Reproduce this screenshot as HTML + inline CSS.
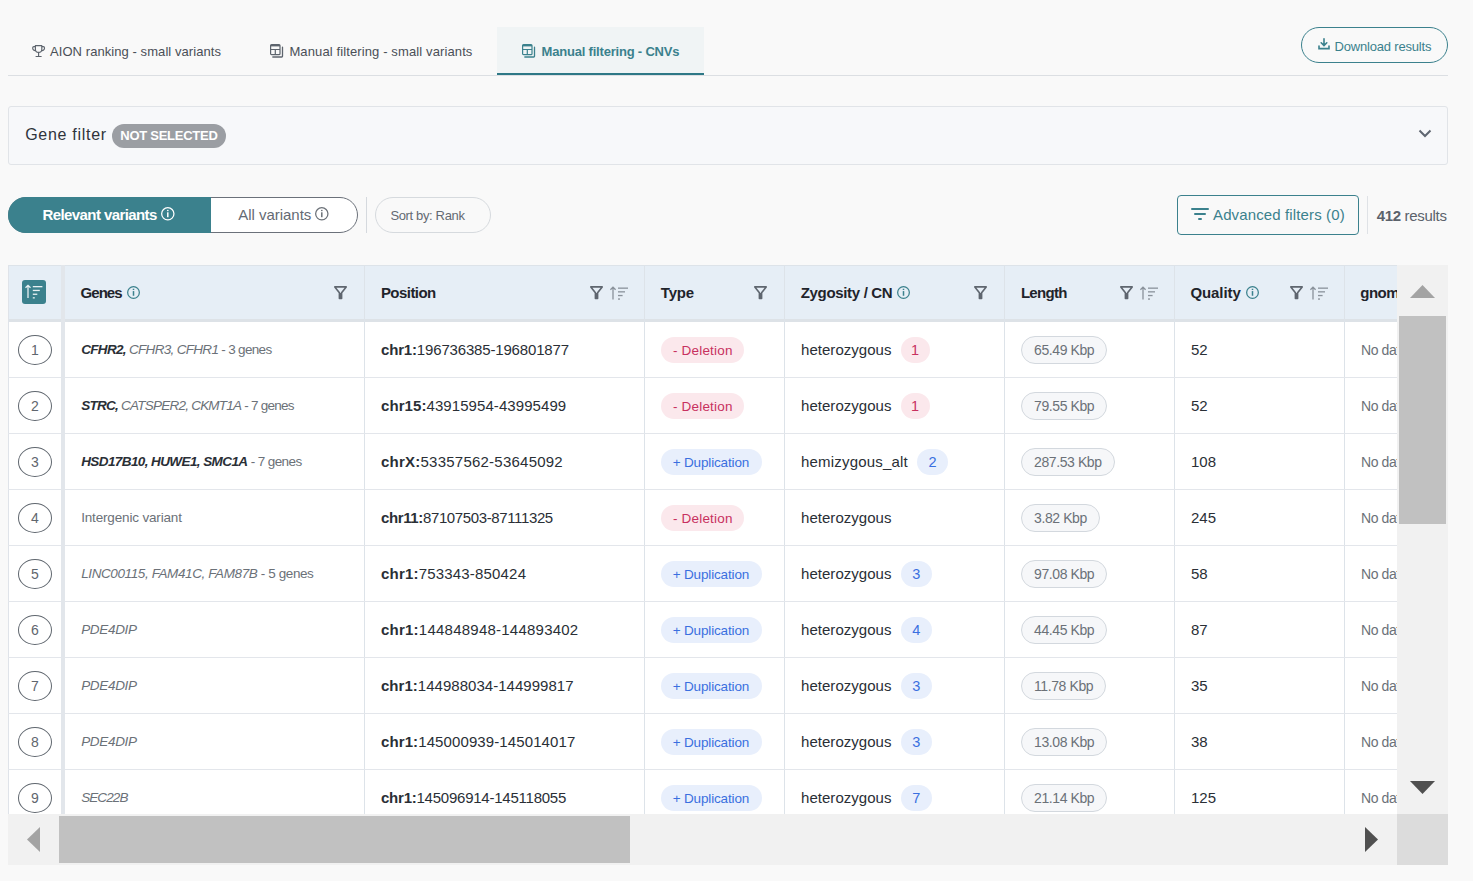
<!DOCTYPE html><html><head><meta charset="utf-8"><style>
html,body{margin:0;padding:0;}
body{width:1473px;height:881px;overflow:hidden;background:#f9f9f9;position:relative;font-family:"Liberation Sans",sans-serif;}
.t{position:absolute;white-space:pre;}
.r{position:absolute;}
.g{color:#6b7178} .n{color:#6b7178;font-style:normal} b{font-weight:700}
.pill{height:28px;line-height:26px;box-sizing:border-box;border:1px solid #d3d8de;background:#f6f7f9;border-radius:14px;padding:0 12px;font-size:14px;color:#6b7178;white-space:pre;letter-spacing:-0.4px}
svg.r{overflow:visible}
</style></head><body>
<div class="r" style="left:497px;top:27px;width:207px;height:48px;background:#f0f4f5"></div>
<div class="r" style="left:8px;top:75px;width:1440px;height:1px;background:#dcdfe3"></div>
<div class="r" style="left:497px;top:73px;width:207px;height:2px;background:#2e7886"></div>
<svg class="r" style="left:32px;top:45px;" width="13" height="13" viewBox="0 0 13 13"><g fill="none" stroke="#5d646d" stroke-width="1.15" stroke-linejoin="round"><path d="M3.4 0.6h6.4v3.6a3.2 3.2 0 0 1-6.4 0z"></path><path d="M3.4 1.6H1.9a1.2 1.2 0 0 0-1.2 1.2v0.4a2.4 2.4 0 0 0 2.9 2.3M9.8 1.6h1.5a1.2 1.2 0 0 1 1.2 1.2v0.4a2.4 2.4 0 0 1-2.9 2.3"></path><path d="M6.6 7.4v4.1M3.6 11.5h6"></path></g></svg>
<div class="t" style="left: 50px; top: 44.9px; font-size: 13px; line-height: 13px; color: rgb(74, 79, 87); font-weight: 400; font-style: normal; letter-spacing: 0.069px;">AION ranking - small variants</div>
<svg class="r" style="left:270px;top:44px;" width="14" height="14" viewBox="0 0 14 14"><g fill="none" stroke="#5d646d" stroke-width="1.2"><rect x="0.6" y="0.6" width="9.4" height="10.1" rx="1"></rect><path d="M0.6 1.6h9.4" stroke-width="1.6"></path><path d="M0.6 5.5h9.4M5.3 5.5v5.2"></path><path d="M12.5 3.2V12.2a0.8 0.8 0 0 1-0.8 0.8H2.8" stroke-width="1.3" stroke-linecap="round"></path></g></svg>
<div class="t" style="left: 289.4px; top: 44.9px; font-size: 13px; line-height: 13px; color: rgb(74, 79, 87); font-weight: 400; font-style: normal; letter-spacing: 0.119px;">Manual filtering - small variants</div>
<svg class="r" style="left:522px;top:44px;" width="14" height="14" viewBox="0 0 14 14"><g fill="none" stroke="#3b818d" stroke-width="1.2"><rect x="0.6" y="0.6" width="9.4" height="10.1" rx="1"></rect><path d="M0.6 1.6h9.4" stroke-width="1.6"></path><path d="M0.6 5.5h9.4M5.3 5.5v5.2"></path><path d="M12.5 3.2V12.2a0.8 0.8 0 0 1-0.8 0.8H2.8" stroke-width="1.3" stroke-linecap="round"></path></g></svg>
<div class="t" style="left: 541.5px; top: 44.9px; font-size: 13px; line-height: 13px; color: rgb(59, 129, 141); font-weight: 700; font-style: normal; letter-spacing: -0.195px;">Manual filtering - CNVs</div>
<div class="r" style="left:1301px;top:27px;width:147px;height:35.5px;border:1px solid #3b818d;border-radius:18px;box-sizing:border-box"></div>
<svg class="r" style="left:1318px;top:38px;" width="12" height="12" viewBox="0 0 12 12"><g fill="none" stroke="#3b818d" stroke-width="1.6" stroke-linecap="round"><path d="M6 0.8v6.8M3.2 4.8L6 7.6l2.8-2.8"></path><path d="M1 8v2.6h10V8"></path></g></svg>
<div class="t" style="left: 1334.5px; top: 40.2px; font-size: 13px; line-height: 13px; color: rgb(59, 129, 141); font-weight: 400; font-style: normal; letter-spacing: -0.181px;">Download results</div>
<div class="r" style="left:8px;top:106px;width:1440px;height:59px;background:#f7f8fa;border:1px solid #e1e4e8;border-radius:3px;box-sizing:border-box"></div>
<div class="t" style="left: 25.2px; top: 127.16px; font-size: 16px; line-height: 16px; color: rgb(47, 52, 59); font-weight: 400; font-style: normal; letter-spacing: 0.719px;">Gene filter</div>
<div class="r" style="left:112px;top:124px;width:114px;height:24px;background:#9b9ea3;border-radius:12px"></div>
<div class="t" style="left: 120.3px; top: 128.6px; font-size: 13px; line-height: 13px; color: rgb(255, 255, 255); font-weight: 700; font-style: normal; letter-spacing: -0.264px;">NOT SELECTED</div>
<svg class="r" style="left:1418px;top:129px;" width="14" height="10" viewBox="0 0 14 10"><path d="M1.5 1.5l5.5 5.5 5.5-5.5" fill="none" stroke="#5f6670" stroke-width="2"></path></svg>
<div class="r" style="left:8px;top:197px;width:350px;height:36px;background:#fff;border:1px solid #6b717a;border-radius:18px;box-sizing:border-box"></div>
<div class="r" style="left:8px;top:197px;width:202.5px;height:36px;background:#3b818d;border-radius:18px 0 0 18px"></div>
<div class="t" style="left: 42.4px; top: 207.1px; font-size: 15px; line-height: 15px; color: rgb(255, 255, 255); font-weight: 700; font-style: normal; letter-spacing: -0.577px;">Relevant variants</div>
<svg class="r" style="left:160.6px;top:207.2px;" width="13.6" height="13.6" viewBox="0 0 13.6 13.6"><g fill="none" stroke="#ffffff" stroke-width="1.25"><circle cx="6.8" cy="6.8" r="6.1499999999999995"></circle></g><rect x="6.05" y="5.30" width="1.5" height="4.90" fill="#ffffff"></rect><rect x="6.05" y="2.86" width="1.5" height="1.3" fill="#ffffff"></rect></svg>
<div class="t" style="left: 238.3px; top: 206.9px; font-size: 15px; line-height: 15px; color: rgb(100, 106, 115); font-weight: 400; font-style: normal; letter-spacing: -0.033px;">All variants</div>
<svg class="r" style="left:315px;top:207.2px;" width="13.6" height="13.6" viewBox="0 0 13.6 13.6"><g fill="none" stroke="#6b7178" stroke-width="1.25"><circle cx="6.8" cy="6.8" r="6.1499999999999995"></circle></g><rect x="6.05" y="5.30" width="1.5" height="4.90" fill="#6b7178"></rect><rect x="6.05" y="2.86" width="1.5" height="1.3" fill="#6b7178"></rect></svg>
<div class="r" style="left:366px;top:197px;width:1px;height:36px;background:#d5d9de"></div>
<div class="r" style="left:375px;top:197px;width:116px;height:36px;background:transparent;border:1px solid #d6dade;border-radius:18px;box-sizing:border-box"></div>
<div class="t" style="left: 390.4px; top: 208.8px; font-size: 13px; line-height: 13px; color: rgb(100, 106, 115); font-weight: 400; font-style: normal; letter-spacing: -0.355px;">Sort by: Rank</div>
<div class="r" style="left:1177px;top:195px;width:182px;height:40px;border:1px solid #3b818d;border-radius:4px;box-sizing:border-box"></div>
<div class="r" style="left:1191px;top:208px;width:18px;height:2px;background:#3b818d;border-radius:1px"></div>
<div class="r" style="left:1194px;top:213px;width:12px;height:2px;background:#3b818d;border-radius:1px"></div>
<div class="r" style="left:1198px;top:218px;width:4px;height:2px;background:#3b818d;border-radius:1px"></div>
<div class="t" style="left: 1213px; top: 207px; font-size: 15px; line-height: 15px; color: rgb(59, 129, 141); font-weight: 400; font-style: normal; letter-spacing: 0.13px;">Advanced filters (0)</div>
<div class="r" style="left:1367px;top:196px;width:1px;height:38px;background:#dfe2e6"></div>
<div class="t" style="left: 1376.7px; top: 207.9px; font-size: 15px; line-height: 15px; color: rgb(91, 98, 107); font-weight: 400; font-style: normal; letter-spacing: -0.319px;"><b>412</b> results</div>
<div class="r" style="left:8px;top:265px;width:1389px;height:549px;overflow:hidden;background:#fff">
<div class="r" style="left:0px;top:0px;width:1500px;height:1px;background:#dde3e9"></div>
<div class="r" style="left:0px;top:1px;width:1500px;height:53px;background:#e6eef6"></div>
<div class="r" style="left:0px;top:54px;width:1500px;height:3px;background:#dde2e7"></div>
<div class="r" style="left:0px;top:0px;width:1px;height:600px;background:#dfe3e9"></div>
<div class="r" style="left:356px;top:0px;width:1px;height:600px;background:#dde3e9"></div>
<div class="r" style="left:636px;top:0px;width:1px;height:600px;background:#dde3e9"></div>
<div class="r" style="left:776px;top:0px;width:1px;height:600px;background:#dde3e9"></div>
<div class="r" style="left:996px;top:0px;width:1px;height:600px;background:#dde3e9"></div>
<div class="r" style="left:1166px;top:0px;width:1px;height:600px;background:#dde3e9"></div>
<div class="r" style="left:1336px;top:0px;width:1px;height:600px;background:#dde3e9"></div>
<div class="r" style="left:0px;top:112px;width:1500px;height:1px;background:#e3e6eb"></div>
<div class="r" style="left:0px;top:168px;width:1500px;height:1px;background:#e3e6eb"></div>
<div class="r" style="left:0px;top:224px;width:1500px;height:1px;background:#e3e6eb"></div>
<div class="r" style="left:0px;top:280px;width:1500px;height:1px;background:#e3e6eb"></div>
<div class="r" style="left:0px;top:336px;width:1500px;height:1px;background:#e3e6eb"></div>
<div class="r" style="left:0px;top:392px;width:1500px;height:1px;background:#e3e6eb"></div>
<div class="r" style="left:0px;top:448px;width:1500px;height:1px;background:#e3e6eb"></div>
<div class="r" style="left:0px;top:504px;width:1500px;height:1px;background:#e3e6eb"></div>
<div class="r" style="left:0px;top:560px;width:1500px;height:1px;background:#e3e6eb"></div>
<div class="r" style="left:53px;top:0px;width:4px;height:600px;background:#e2e6eb"></div>
<svg class="r" style="left:14px;top:15px;" width="24" height="24" viewBox="0 0 24 24"><rect width="24" height="24" rx="3" fill="#3b818d"></rect><g stroke="#e8f0f2" stroke-width="1.3" fill="none"><path d="M6 18V5.3M3.5 7.8L6 5.3l2.5 2.5"></path></g><g fill="#e8f0f2"><rect x="10.8" y="6" width="9.6" height="1.3"></rect><rect x="10.8" y="9.8" width="7" height="1.3"></rect><rect x="10.8" y="13.6" width="4.5" height="1.3"></rect><rect x="10.8" y="17.2" width="2" height="1.3"></rect></g></svg>
<div class="t" style="left: 72.6px; top: 20.4px; font-size: 15px; line-height: 15px; color: rgb(31, 36, 43); font-weight: 700; font-style: normal; letter-spacing: -0.965px;">Genes</div>
<svg class="r" style="left:119px;top:21px;" width="13" height="13" viewBox="0 0 13 13"><g fill="none" stroke="#3b818d" stroke-width="1.25"><circle cx="6.5" cy="6.5" r="5.85"></circle></g><rect x="5.75" y="5.07" width="1.5" height="4.68" fill="#3b818d"></rect><rect x="5.75" y="2.73" width="1.5" height="1.3" fill="#3b818d"></rect></svg>
<svg class="r" style="left:326px;top:20.600000000000023px;" width="13" height="13" viewBox="0 0 13 13"><path d="M0.8 0.9h11.4L7.6 6.8v5.6H5.4V6.8z" fill="none" stroke="#5f666f" stroke-width="1.6" stroke-linejoin="round"></path><rect x="5.3" y="7" width="2.4" height="5.4" fill="#5f666f"></rect></svg>
<div class="t" style="left: 372.9px; top: 20.4px; font-size: 15px; line-height: 15px; color: rgb(31, 36, 43); font-weight: 700; font-style: normal; letter-spacing: -0.539px;">Position</div>
<svg class="r" style="left:582px;top:20.600000000000023px;" width="13" height="13" viewBox="0 0 13 13"><path d="M0.8 0.9h11.4L7.6 6.8v5.6H5.4V6.8z" fill="none" stroke="#5f666f" stroke-width="1.6" stroke-linejoin="round"></path><rect x="5.3" y="7" width="2.4" height="5.4" fill="#5f666f"></rect></svg>
<svg class="r" style="left:602px;top:21px;" width="19" height="14" viewBox="0 0 19 14"><g stroke="#8a929b" stroke-width="1.3" fill="none"><path d="M3 13.5V1.2M0.4 3.8L3 1.2l2.6 2.6"></path></g><g fill="#8a929b"><rect x="8" y="1.5" width="10" height="1.3"></rect><rect x="8" y="5.2" width="7" height="1.3"></rect><rect x="8" y="8.9" width="4.6" height="1.3"></rect><rect x="8" y="12.4" width="2" height="1.3"></rect></g></svg>
<div class="t" style="left: 652.8px; top: 20.4px; font-size: 15px; line-height: 15px; color: rgb(31, 36, 43); font-weight: 700; font-style: normal; letter-spacing: -0.169px;">Type</div>
<svg class="r" style="left:746px;top:20.600000000000023px;" width="13" height="13" viewBox="0 0 13 13"><path d="M0.8 0.9h11.4L7.6 6.8v5.6H5.4V6.8z" fill="none" stroke="#5f666f" stroke-width="1.6" stroke-linejoin="round"></path><rect x="5.3" y="7" width="2.4" height="5.4" fill="#5f666f"></rect></svg>
<div class="t" style="left: 792.7px; top: 20.4px; font-size: 15px; line-height: 15px; color: rgb(31, 36, 43); font-weight: 700; font-style: normal; letter-spacing: -0.322px;">Zygosity / CN</div>
<svg class="r" style="left:889px;top:21px;" width="13" height="13" viewBox="0 0 13 13"><g fill="none" stroke="#3b818d" stroke-width="1.25"><circle cx="6.5" cy="6.5" r="5.85"></circle></g><rect x="5.75" y="5.07" width="1.5" height="4.68" fill="#3b818d"></rect><rect x="5.75" y="2.73" width="1.5" height="1.3" fill="#3b818d"></rect></svg>
<svg class="r" style="left:965.5px;top:20.600000000000023px;" width="13" height="13" viewBox="0 0 13 13"><path d="M0.8 0.9h11.4L7.6 6.8v5.6H5.4V6.8z" fill="none" stroke="#5f666f" stroke-width="1.6" stroke-linejoin="round"></path><rect x="5.3" y="7" width="2.4" height="5.4" fill="#5f666f"></rect></svg>
<div class="t" style="left: 1012.9px; top: 20.4px; font-size: 15px; line-height: 15px; color: rgb(31, 36, 43); font-weight: 700; font-style: normal; letter-spacing: -0.7px;">Length</div>
<svg class="r" style="left:1112px;top:20.600000000000023px;" width="13" height="13" viewBox="0 0 13 13"><path d="M0.8 0.9h11.4L7.6 6.8v5.6H5.4V6.8z" fill="none" stroke="#5f666f" stroke-width="1.6" stroke-linejoin="round"></path><rect x="5.3" y="7" width="2.4" height="5.4" fill="#5f666f"></rect></svg>
<svg class="r" style="left:1132px;top:21px;" width="19" height="14" viewBox="0 0 19 14"><g stroke="#8a929b" stroke-width="1.3" fill="none"><path d="M3 13.5V1.2M0.4 3.8L3 1.2l2.6 2.6"></path></g><g fill="#8a929b"><rect x="8" y="1.5" width="10" height="1.3"></rect><rect x="8" y="5.2" width="7" height="1.3"></rect><rect x="8" y="8.9" width="4.6" height="1.3"></rect><rect x="8" y="12.4" width="2" height="1.3"></rect></g></svg>
<div class="t" style="left: 1182.4px; top: 20.4px; font-size: 15px; line-height: 15px; color: rgb(31, 36, 43); font-weight: 700; font-style: normal; letter-spacing: -0.077px;">Quality</div>
<svg class="r" style="left:1238.3px;top:21px;" width="13" height="13" viewBox="0 0 13 13"><g fill="none" stroke="#3b818d" stroke-width="1.25"><circle cx="6.5" cy="6.5" r="5.85"></circle></g><rect x="5.75" y="5.07" width="1.5" height="4.68" fill="#3b818d"></rect><rect x="5.75" y="2.73" width="1.5" height="1.3" fill="#3b818d"></rect></svg>
<svg class="r" style="left:1282px;top:20.600000000000023px;" width="13" height="13" viewBox="0 0 13 13"><path d="M0.8 0.9h11.4L7.6 6.8v5.6H5.4V6.8z" fill="none" stroke="#5f666f" stroke-width="1.6" stroke-linejoin="round"></path><rect x="5.3" y="7" width="2.4" height="5.4" fill="#5f666f"></rect></svg>
<svg class="r" style="left:1302px;top:21px;" width="19" height="14" viewBox="0 0 19 14"><g stroke="#8a929b" stroke-width="1.3" fill="none"><path d="M3 13.5V1.2M0.4 3.8L3 1.2l2.6 2.6"></path></g><g fill="#8a929b"><rect x="8" y="1.5" width="10" height="1.3"></rect><rect x="8" y="5.2" width="7" height="1.3"></rect><rect x="8" y="8.9" width="4.6" height="1.3"></rect><rect x="8" y="12.4" width="2" height="1.3"></rect></g></svg>
<div class="t" style="left:1352.3px;top:20.40px;font-size:15px;line-height:15px;color:#1f242b;font-weight:700;font-style:normal;letter-spacing:-0.5px;">gnomAD</div>
<div class="r" style="left:10px;top:70px;width:34px;height:30px;border:1px solid #5f666e;border-radius:50%;box-sizing:border-box"></div>
<div class="r" style="left:10px;top:70px;width:34px;height:30px;line-height:30px;text-align:center;font-size:14px;color:#5f666e">1</div>
<div class="t" style="left: 73.2px; top: 78.17px; font-size: 13.5px; line-height: 13.5px; color: rgb(42, 47, 54); font-weight: 400; font-style: italic; letter-spacing: -0.682px;"><b>CFHR2,</b> <span class="g">CFHR3, CFHR1</span><span class="n"> - 3 genes</span></div>
<div class="t" style="left: 373px; top: 76.9px; font-size: 15px; line-height: 15px; color: rgb(42, 47, 54); font-weight: 400; font-style: normal; letter-spacing: -0.167px;"><b>chr1:</b>196736385-196801877</div>
<div class="r" style="left:653px;top:72px;width:83px;height:26px;background:#fbe8ec;border-radius:13px"></div>
<div class="t" style="left: 665px; top: 78.57px; font-size: 13.5px; line-height: 13.5px; color: rgb(200, 48, 95); font-weight: 400; font-style: normal; letter-spacing: 0.18px;">- Deletion</div>
<div class="t" style="left: 793px; top: 76.9px; font-size: 15px; line-height: 15px; color: rgb(42, 47, 54); font-weight: 400; font-style: normal; letter-spacing: 0.04px;">heterozygous</div>
<div class="r" style="left:892.5px;top:72px;width:29px;height:26px;line-height:26px;border-radius:13px;background:#fbe8ec;color:#c8305f;text-align:center;font-size:14.5px">1</div>
<div class="r pill" style="left:1013px;top:71px">65.49 Kbp</div>
<div class="t" style="left:1183px;top:76.90px;font-size:15px;line-height:15px;color:#2a2f36;font-weight:400;font-style:normal;letter-spacing:0px;">52</div>
<div class="t" style="left:1353px;top:77.75px;font-size:14px;line-height:14px;color:#6b7178;font-weight:400;font-style:normal;letter-spacing:-0.4px;">No data</div>
<div class="r" style="left:10px;top:126px;width:34px;height:30px;border:1px solid #5f666e;border-radius:50%;box-sizing:border-box"></div>
<div class="r" style="left:10px;top:126px;width:34px;height:30px;line-height:30px;text-align:center;font-size:14px;color:#5f666e">2</div>
<div class="t" style="left: 73.2px; top: 134.17px; font-size: 13.5px; line-height: 13.5px; color: rgb(42, 47, 54); font-weight: 400; font-style: italic; letter-spacing: -0.756px;"><b>STRC,</b> <span class="g">CATSPER2, CKMT1A</span><span class="n"> - 7 genes</span></div>
<div class="t" style="left: 373px; top: 132.9px; font-size: 15px; line-height: 15px; color: rgb(42, 47, 54); font-weight: 400; font-style: normal; letter-spacing: 0.077px;"><b>chr15:</b>43915954-43995499</div>
<div class="r" style="left:653px;top:128px;width:83px;height:26px;background:#fbe8ec;border-radius:13px"></div>
<div class="t" style="left: 665px; top: 134.57px; font-size: 13.5px; line-height: 13.5px; color: rgb(200, 48, 95); font-weight: 400; font-style: normal; letter-spacing: 0.18px;">- Deletion</div>
<div class="t" style="left: 793px; top: 132.9px; font-size: 15px; line-height: 15px; color: rgb(42, 47, 54); font-weight: 400; font-style: normal; letter-spacing: 0.04px;">heterozygous</div>
<div class="r" style="left:892.5px;top:128px;width:29px;height:26px;line-height:26px;border-radius:13px;background:#fbe8ec;color:#c8305f;text-align:center;font-size:14.5px">1</div>
<div class="r pill" style="left:1013px;top:127px">79.55 Kbp</div>
<div class="t" style="left:1183px;top:132.90px;font-size:15px;line-height:15px;color:#2a2f36;font-weight:400;font-style:normal;letter-spacing:0px;">52</div>
<div class="t" style="left:1353px;top:133.75px;font-size:14px;line-height:14px;color:#6b7178;font-weight:400;font-style:normal;letter-spacing:-0.4px;">No data</div>
<div class="r" style="left:10px;top:182px;width:34px;height:30px;border:1px solid #5f666e;border-radius:50%;box-sizing:border-box"></div>
<div class="r" style="left:10px;top:182px;width:34px;height:30px;line-height:30px;text-align:center;font-size:14px;color:#5f666e">3</div>
<div class="t" style="left: 73.2px; top: 190.17px; font-size: 13.5px; line-height: 13.5px; color: rgb(42, 47, 54); font-weight: 400; font-style: italic; letter-spacing: -0.592px;"><b>HSD17B10, HUWE1, SMC1A</b><span class="n"> - 7 genes</span></div>
<div class="t" style="left: 373px; top: 188.9px; font-size: 15px; line-height: 15px; color: rgb(42, 47, 54); font-weight: 400; font-style: normal; letter-spacing: 0.232px;"><b>chrX:</b>53357562-53645092</div>
<div class="r" style="left:653px;top:184px;width:100.5px;height:26px;background:#e8effc;border-radius:13px"></div>
<div class="t" style="left: 664.7px; top: 190.57px; font-size: 13.5px; line-height: 13.5px; color: rgb(58, 111, 224); font-weight: 400; font-style: normal; letter-spacing: -0.153px;">+ Duplication</div>
<div class="t" style="left: 793px; top: 188.9px; font-size: 15px; line-height: 15px; color: rgb(42, 47, 54); font-weight: 400; font-style: normal; letter-spacing: 0.19px;">hemizygous_alt</div>
<div class="r" style="left:908.7px;top:184px;width:31.5px;height:26px;line-height:26px;border-radius:13px;background:#e8effc;color:#3a6fe0;text-align:center;font-size:14.5px">2</div>
<div class="r pill" style="left:1013px;top:183px">287.53 Kbp</div>
<div class="t" style="left:1183px;top:188.90px;font-size:15px;line-height:15px;color:#2a2f36;font-weight:400;font-style:normal;letter-spacing:0px;">108</div>
<div class="t" style="left:1353px;top:189.75px;font-size:14px;line-height:14px;color:#6b7178;font-weight:400;font-style:normal;letter-spacing:-0.4px;">No data</div>
<div class="r" style="left:10px;top:238px;width:34px;height:30px;border:1px solid #5f666e;border-radius:50%;box-sizing:border-box"></div>
<div class="r" style="left:10px;top:238px;width:34px;height:30px;line-height:30px;text-align:center;font-size:14px;color:#5f666e">4</div>
<div class="t" style="left: 73.2px; top: 246.17px; font-size: 13.5px; line-height: 13.5px; color: rgb(42, 47, 54); font-weight: 400; font-style: italic; letter-spacing: -0.168px;"><span class="n">Intergenic variant</span></div>
<div class="t" style="left: 373px; top: 244.9px; font-size: 15px; line-height: 15px; color: rgb(42, 47, 54); font-weight: 400; font-style: normal; letter-spacing: -0.375px;"><b>chr11:</b>87107503-87111325</div>
<div class="r" style="left:653px;top:240px;width:83px;height:26px;background:#fbe8ec;border-radius:13px"></div>
<div class="t" style="left: 665px; top: 246.57px; font-size: 13.5px; line-height: 13.5px; color: rgb(200, 48, 95); font-weight: 400; font-style: normal; letter-spacing: 0.18px;">- Deletion</div>
<div class="t" style="left: 793px; top: 244.9px; font-size: 15px; line-height: 15px; color: rgb(42, 47, 54); font-weight: 400; font-style: normal; letter-spacing: 0.04px;">heterozygous</div>
<div class="r pill" style="left:1013px;top:239px">3.82 Kbp</div>
<div class="t" style="left:1183px;top:244.90px;font-size:15px;line-height:15px;color:#2a2f36;font-weight:400;font-style:normal;letter-spacing:0px;">245</div>
<div class="t" style="left:1353px;top:245.75px;font-size:14px;line-height:14px;color:#6b7178;font-weight:400;font-style:normal;letter-spacing:-0.4px;">No data</div>
<div class="r" style="left:10px;top:294px;width:34px;height:30px;border:1px solid #5f666e;border-radius:50%;box-sizing:border-box"></div>
<div class="r" style="left:10px;top:294px;width:34px;height:30px;line-height:30px;text-align:center;font-size:14px;color:#5f666e">5</div>
<div class="t" style="left: 73.2px; top: 302.17px; font-size: 13.5px; line-height: 13.5px; color: rgb(42, 47, 54); font-weight: 400; font-style: italic; letter-spacing: -0.395px;"><span class="g">LINC00115, FAM41C, FAM87B</span><span class="n"> - 5 genes</span></div>
<div class="t" style="left: 373px; top: 300.9px; font-size: 15px; line-height: 15px; color: rgb(42, 47, 54); font-weight: 400; font-style: normal; letter-spacing: 0.188px;"><b>chr1:</b>753343-850424</div>
<div class="r" style="left:653px;top:296px;width:100.5px;height:26px;background:#e8effc;border-radius:13px"></div>
<div class="t" style="left: 664.7px; top: 302.57px; font-size: 13.5px; line-height: 13.5px; color: rgb(58, 111, 224); font-weight: 400; font-style: normal; letter-spacing: -0.153px;">+ Duplication</div>
<div class="t" style="left: 793px; top: 300.9px; font-size: 15px; line-height: 15px; color: rgb(42, 47, 54); font-weight: 400; font-style: normal; letter-spacing: 0.04px;">heterozygous</div>
<div class="r" style="left:892.5px;top:296px;width:31.5px;height:26px;line-height:26px;border-radius:13px;background:#e8effc;color:#3a6fe0;text-align:center;font-size:14.5px">3</div>
<div class="r pill" style="left:1013px;top:295px">97.08 Kbp</div>
<div class="t" style="left:1183px;top:300.90px;font-size:15px;line-height:15px;color:#2a2f36;font-weight:400;font-style:normal;letter-spacing:0px;">58</div>
<div class="t" style="left:1353px;top:301.75px;font-size:14px;line-height:14px;color:#6b7178;font-weight:400;font-style:normal;letter-spacing:-0.4px;">No data</div>
<div class="r" style="left:10px;top:350px;width:34px;height:30px;border:1px solid #5f666e;border-radius:50%;box-sizing:border-box"></div>
<div class="r" style="left:10px;top:350px;width:34px;height:30px;line-height:30px;text-align:center;font-size:14px;color:#5f666e">6</div>
<div class="t" style="left: 73.2px; top: 358.17px; font-size: 13.5px; line-height: 13.5px; color: rgb(42, 47, 54); font-weight: 400; font-style: italic; letter-spacing: -0.33px;"><span class="g">PDE4DIP</span></div>
<div class="t" style="left: 373px; top: 356.9px; font-size: 15px; line-height: 15px; color: rgb(42, 47, 54); font-weight: 400; font-style: normal; letter-spacing: 0.233px;"><b>chr1:</b>144848948-144893402</div>
<div class="r" style="left:653px;top:352px;width:100.5px;height:26px;background:#e8effc;border-radius:13px"></div>
<div class="t" style="left: 664.7px; top: 358.57px; font-size: 13.5px; line-height: 13.5px; color: rgb(58, 111, 224); font-weight: 400; font-style: normal; letter-spacing: -0.153px;">+ Duplication</div>
<div class="t" style="left: 793px; top: 356.9px; font-size: 15px; line-height: 15px; color: rgb(42, 47, 54); font-weight: 400; font-style: normal; letter-spacing: 0.04px;">heterozygous</div>
<div class="r" style="left:892.5px;top:352px;width:31.5px;height:26px;line-height:26px;border-radius:13px;background:#e8effc;color:#3a6fe0;text-align:center;font-size:14.5px">4</div>
<div class="r pill" style="left:1013px;top:351px">44.45 Kbp</div>
<div class="t" style="left:1183px;top:356.90px;font-size:15px;line-height:15px;color:#2a2f36;font-weight:400;font-style:normal;letter-spacing:0px;">87</div>
<div class="t" style="left:1353px;top:357.75px;font-size:14px;line-height:14px;color:#6b7178;font-weight:400;font-style:normal;letter-spacing:-0.4px;">No data</div>
<div class="r" style="left:10px;top:406px;width:34px;height:30px;border:1px solid #5f666e;border-radius:50%;box-sizing:border-box"></div>
<div class="r" style="left:10px;top:406px;width:34px;height:30px;line-height:30px;text-align:center;font-size:14px;color:#5f666e">7</div>
<div class="t" style="left: 73.2px; top: 414.17px; font-size: 13.5px; line-height: 13.5px; color: rgb(42, 47, 54); font-weight: 400; font-style: italic; letter-spacing: -0.33px;"><span class="g">PDE4DIP</span></div>
<div class="t" style="left: 373px; top: 412.9px; font-size: 15px; line-height: 15px; color: rgb(42, 47, 54); font-weight: 400; font-style: normal; letter-spacing: 0.029px;"><b>chr1:</b>144988034-144999817</div>
<div class="r" style="left:653px;top:408px;width:100.5px;height:26px;background:#e8effc;border-radius:13px"></div>
<div class="t" style="left: 664.7px; top: 414.57px; font-size: 13.5px; line-height: 13.5px; color: rgb(58, 111, 224); font-weight: 400; font-style: normal; letter-spacing: -0.153px;">+ Duplication</div>
<div class="t" style="left: 793px; top: 412.9px; font-size: 15px; line-height: 15px; color: rgb(42, 47, 54); font-weight: 400; font-style: normal; letter-spacing: 0.04px;">heterozygous</div>
<div class="r" style="left:892.5px;top:408px;width:31.5px;height:26px;line-height:26px;border-radius:13px;background:#e8effc;color:#3a6fe0;text-align:center;font-size:14.5px">3</div>
<div class="r pill" style="left:1013px;top:407px">11.78 Kbp</div>
<div class="t" style="left:1183px;top:412.90px;font-size:15px;line-height:15px;color:#2a2f36;font-weight:400;font-style:normal;letter-spacing:0px;">35</div>
<div class="t" style="left:1353px;top:413.75px;font-size:14px;line-height:14px;color:#6b7178;font-weight:400;font-style:normal;letter-spacing:-0.4px;">No data</div>
<div class="r" style="left:10px;top:462px;width:34px;height:30px;border:1px solid #5f666e;border-radius:50%;box-sizing:border-box"></div>
<div class="r" style="left:10px;top:462px;width:34px;height:30px;line-height:30px;text-align:center;font-size:14px;color:#5f666e">8</div>
<div class="t" style="left: 73.2px; top: 470.17px; font-size: 13.5px; line-height: 13.5px; color: rgb(42, 47, 54); font-weight: 400; font-style: italic; letter-spacing: -0.33px;"><span class="g">PDE4DIP</span></div>
<div class="t" style="left: 373px; top: 468.9px; font-size: 15px; line-height: 15px; color: rgb(42, 47, 54); font-weight: 400; font-style: normal; letter-spacing: 0.107px;"><b>chr1:</b>145000939-145014017</div>
<div class="r" style="left:653px;top:464px;width:100.5px;height:26px;background:#e8effc;border-radius:13px"></div>
<div class="t" style="left: 664.7px; top: 470.57px; font-size: 13.5px; line-height: 13.5px; color: rgb(58, 111, 224); font-weight: 400; font-style: normal; letter-spacing: -0.153px;">+ Duplication</div>
<div class="t" style="left: 793px; top: 468.9px; font-size: 15px; line-height: 15px; color: rgb(42, 47, 54); font-weight: 400; font-style: normal; letter-spacing: 0.04px;">heterozygous</div>
<div class="r" style="left:892.5px;top:464px;width:31.5px;height:26px;line-height:26px;border-radius:13px;background:#e8effc;color:#3a6fe0;text-align:center;font-size:14.5px">3</div>
<div class="r pill" style="left:1013px;top:463px">13.08 Kbp</div>
<div class="t" style="left:1183px;top:468.90px;font-size:15px;line-height:15px;color:#2a2f36;font-weight:400;font-style:normal;letter-spacing:0px;">38</div>
<div class="t" style="left:1353px;top:469.75px;font-size:14px;line-height:14px;color:#6b7178;font-weight:400;font-style:normal;letter-spacing:-0.4px;">No data</div>
<div class="r" style="left:10px;top:518px;width:34px;height:30px;border:1px solid #5f666e;border-radius:50%;box-sizing:border-box"></div>
<div class="r" style="left:10px;top:518px;width:34px;height:30px;line-height:30px;text-align:center;font-size:14px;color:#5f666e">9</div>
<div class="t" style="left: 73.2px; top: 526.17px; font-size: 13.5px; line-height: 13.5px; color: rgb(42, 47, 54); font-weight: 400; font-style: italic; letter-spacing: -0.916px;"><span class="g">SEC22B</span></div>
<div class="t" style="left: 373px; top: 524.9px; font-size: 15px; line-height: 15px; color: rgb(42, 47, 54); font-weight: 400; font-style: normal; letter-spacing: -0.236px;"><b>chr1:</b>145096914-145118055</div>
<div class="r" style="left:653px;top:520px;width:100.5px;height:26px;background:#e8effc;border-radius:13px"></div>
<div class="t" style="left: 664.7px; top: 526.57px; font-size: 13.5px; line-height: 13.5px; color: rgb(58, 111, 224); font-weight: 400; font-style: normal; letter-spacing: -0.153px;">+ Duplication</div>
<div class="t" style="left: 793px; top: 524.9px; font-size: 15px; line-height: 15px; color: rgb(42, 47, 54); font-weight: 400; font-style: normal; letter-spacing: 0.04px;">heterozygous</div>
<div class="r" style="left:892.5px;top:520px;width:31.5px;height:26px;line-height:26px;border-radius:13px;background:#e8effc;color:#3a6fe0;text-align:center;font-size:14.5px">7</div>
<div class="r pill" style="left:1013px;top:519px">21.14 Kbp</div>
<div class="t" style="left:1183px;top:524.90px;font-size:15px;line-height:15px;color:#2a2f36;font-weight:400;font-style:normal;letter-spacing:0px;">125</div>
<div class="t" style="left:1353px;top:525.75px;font-size:14px;line-height:14px;color:#6b7178;font-weight:400;font-style:normal;letter-spacing:-0.4px;">No data</div>
</div>
<div class="r" style="left:1397px;top:265px;width:51px;height:549px;background:#f1f1f1"></div>
<div class="r" style="left:1399px;top:316px;width:47px;height:208px;background:#c1c1c1"></div>
<svg class="r" style="left:1397px;top:265px;" width="51" height="549" viewBox="0 0 51 549"><path d="M13 33h25L25.5 20z" fill="#a3a3a3"></path><path d="M13 516h25L25.5 529z" fill="#505050"></path></svg>
<div class="r" style="left:8px;top:814px;width:1389px;height:51px;background:#f1f1f1"></div>
<div class="r" style="left:59px;top:816px;width:571px;height:47px;background:#c1c1c1"></div>
<svg class="r" style="left:8px;top:814px;" width="1389" height="50" viewBox="0 0 1389 50"><path d="M32 13v25L19 25.5z" fill="#a3a3a3"></path><path d="M1357 13v25l13-12.5z" fill="#505050"></path></svg>
<div class="r" style="left:1397px;top:814px;width:51px;height:51px;background:#dcdcdc"></div>
</body></html>
